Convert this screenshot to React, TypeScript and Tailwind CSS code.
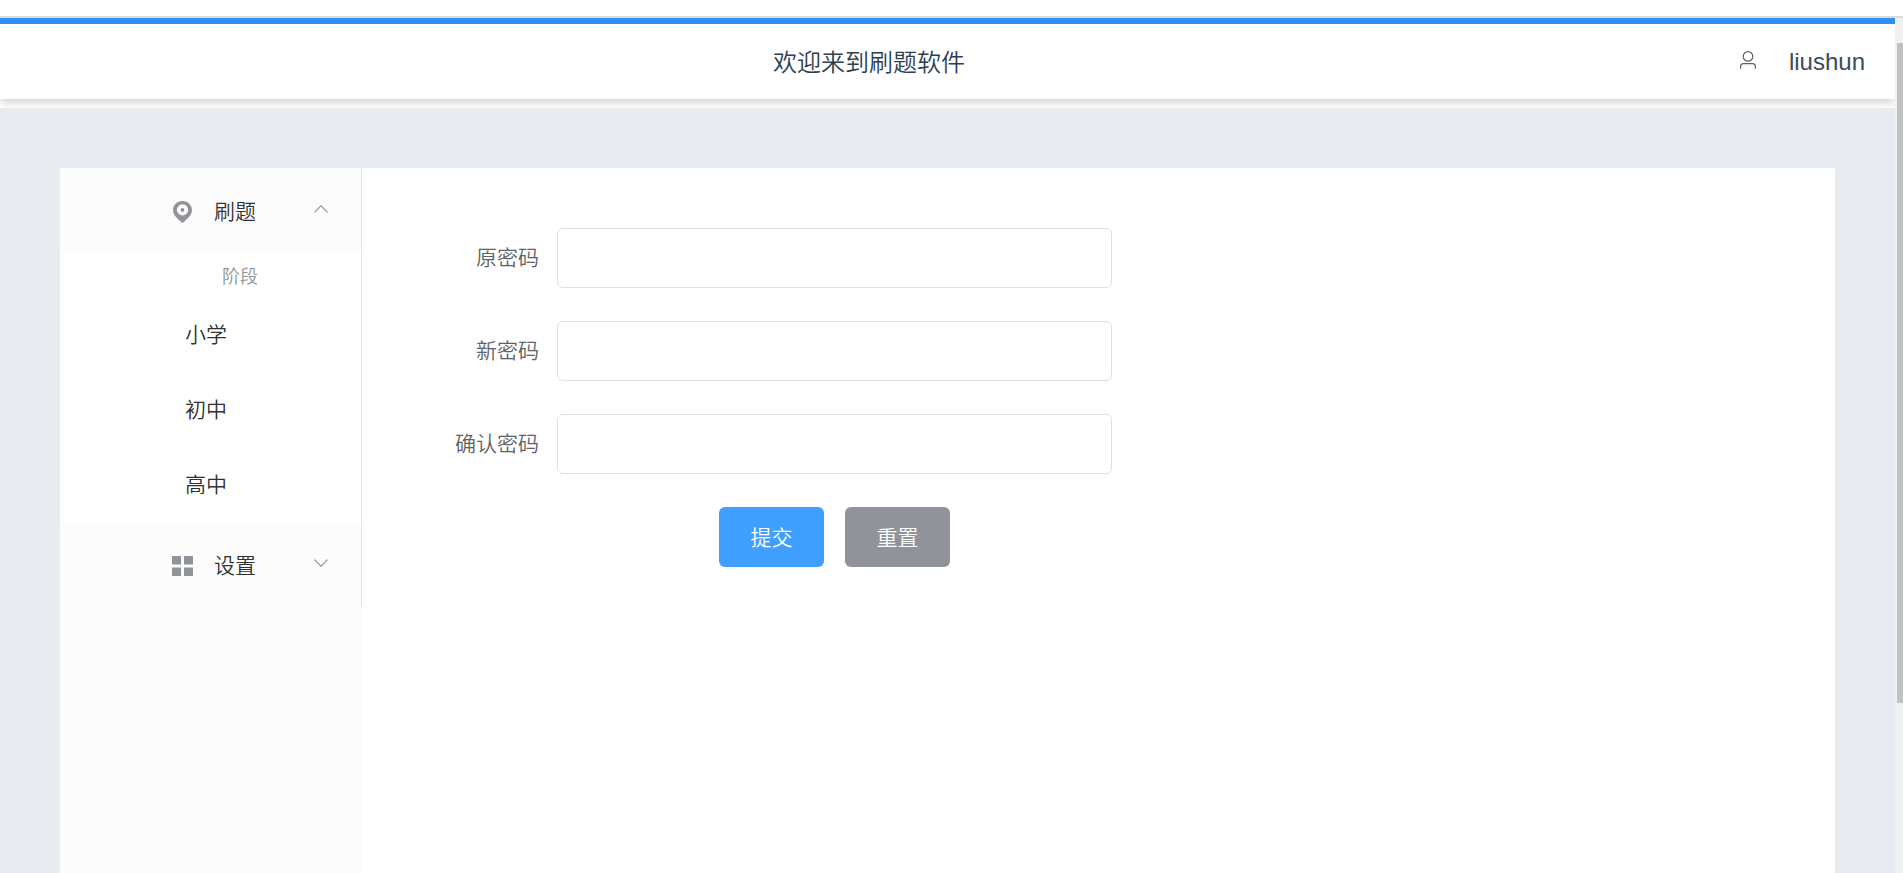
import type { ReactNode } from "react";

const fields = ["原密码", "新密码", "确认密码"];
const stages = ["小学", "初中", "高中"];

function UserIcon() {
    return (
        <svg className="mb-[3px] h-[18px] w-4" viewBox="0 0 16 18" fill="none" stroke="#606266" strokeWidth="1.2">
            <circle cx="8" cy="5.4" r="4.8" />
            <path d="M0.6 17.8V15.4C0.6 13.6 1.9 12.6 3.6 12.6H12.4C14.1 12.6 15.4 13.6 15.4 15.4V17.8" />
        </svg>
    );
}

function LocationIcon() {
    return (
        <svg className="h-[22px] w-[19px]" viewBox="0 0 19 22" fill="#909399">
            <path fillRule="evenodd" d="M9.5 22C6.6 19.2 0 14.8 0 9.2C0 4 4.2 0 9.5 0S19 4 19 9.2C19 14.8 12.4 19.2 9.5 22ZM9.5 3.3A5.6 5.6 0 1 0 9.5 14.5A5.6 5.6 0 1 0 9.5 3.3Z" />
            <circle cx="9.5" cy="8.9" r="1.9" />
        </svg>
    );
}

function MenuIcon() {
    return (
        <svg className="h-5 w-[21px]" viewBox="0 0 21 20" fill="#909399">
            <rect width="9" height="8.5" />
            <rect x="12" width="9" height="8.5" />
            <rect y="11.5" width="9" height="8.5" />
            <rect x="12" y="11.5" width="9" height="8.5" />
        </svg>
    );
}

function Arrow({ open }: { open?: boolean }) {
    return (
        <svg className="mb-[5px] h-2 w-3.5" viewBox="0 0 14 8" fill="none" stroke="#909399" strokeWidth="1.2">
            <path d={open ? "M0.4 7.4L7 0.9L13.6 7.4" : "M0.4 0.6L7 7.1L13.6 0.6"} />
        </svg>
    );
}

function MenuTitle({ icon, text, open }: { icon: ReactNode; text: string; open?: boolean }) {
    return (
        <div className="flex h-[84px] items-center bg-[#fcfcfc] pt-[3px] pr-[33px] pl-[109px] text-[21px] text-[#303133]">
            <span className="flex w-[27px] justify-center">{icon}</span>
            <span className="ml-[18px] flex-1">{text}</span>
            <Arrow open={open} />
        </div>
    );
}

export default function App() {
    return (
        <div className="flex h-[873px] w-[1903px] flex-col overflow-hidden bg-white font-['Liberation_Sans','Noto_Sans_CJK_SC',sans-serif] font-[350]">
            <div className="h-[18px] shrink-0 border-b-2 border-[#dadbdc]"></div>
            <div className="flex min-h-0 flex-1">
                <div className="flex flex-1 flex-col">
                    {/* Header */}
                    <div className="h-[90px] shrink-0 overflow-hidden">
                        <header className="flex h-[81px] items-center border-t-[6px] border-[#3090f2] pr-[30px] pl-[773px] text-2xl text-[#2c3e50] shadow-[0_3px_9px_rgba(0,0,0,0.2)]">
                            <h1 className="flex-1 pt-0.5">欢迎来到刷题软件</h1>
                            <UserIcon />
                            <span className="ml-[33px] text-[#3a4b5c]">liushun</span>
                        </header>
                    </div>

                    <main className="flex flex-1 bg-[#e8ebf0] px-[60px] pt-[60px]">
                        {/* Side menu */}
                        <aside className="w-[302px] bg-[#fcfcfc]">
                            <div className="border-r border-[#e4e4e6]">
                                <MenuTitle icon={<LocationIcon />} text="刷题" open />
                                <div className="bg-white">
                                    <div className="flex h-[45px] items-center pt-1 pl-[162px] text-lg text-[#909399]">阶段</div>
                                    {stages.map((s) => (
                                        <div key={s} className="flex h-[75px] items-center pl-[125px] text-[21px] text-[#303133]">{s}</div>
                                    ))}
                                </div>
                                <MenuTitle icon={<MenuIcon />} text="设置" />
                            </div>
                        </aside>

                        {/* Password form */}
                        <section className="flex-1 bg-white pt-[60px] pl-[45px]">
                            <form className="flex w-[705px] flex-col gap-[33px] text-[21px]">
                                {fields.map((f) => (
                                    <label key={f} className="flex h-[60px] items-center text-[#606266]">
                                        <span className="w-[150px] pr-[18px] text-right">{f}</span>
                                        <input type="password" className="h-[60px] flex-1 rounded-md border border-[#dcdfe6] px-5 outline-none" />
                                    </label>
                                ))}
                                <div className="flex justify-center gap-[21px] pl-[150px] text-white">
                                    <button type="button" className="h-[60px] w-[105px] rounded-md bg-[#409eff] pt-0.5">提交</button>
                                    <button type="button" className="h-[60px] w-[105px] rounded-md bg-[#909399] pt-0.5">重置</button>
                                </div>
                            </form>
                        </section>
                    </main>
                </div>

                {/* Scrollbar */}
                <div className="w-2 bg-[#f1f1f1] pt-[25px] pl-0.5">
                    <div className="h-[660px] bg-[#c1c1c1]"></div>
                </div>
            </div>
        </div>
    );
}
